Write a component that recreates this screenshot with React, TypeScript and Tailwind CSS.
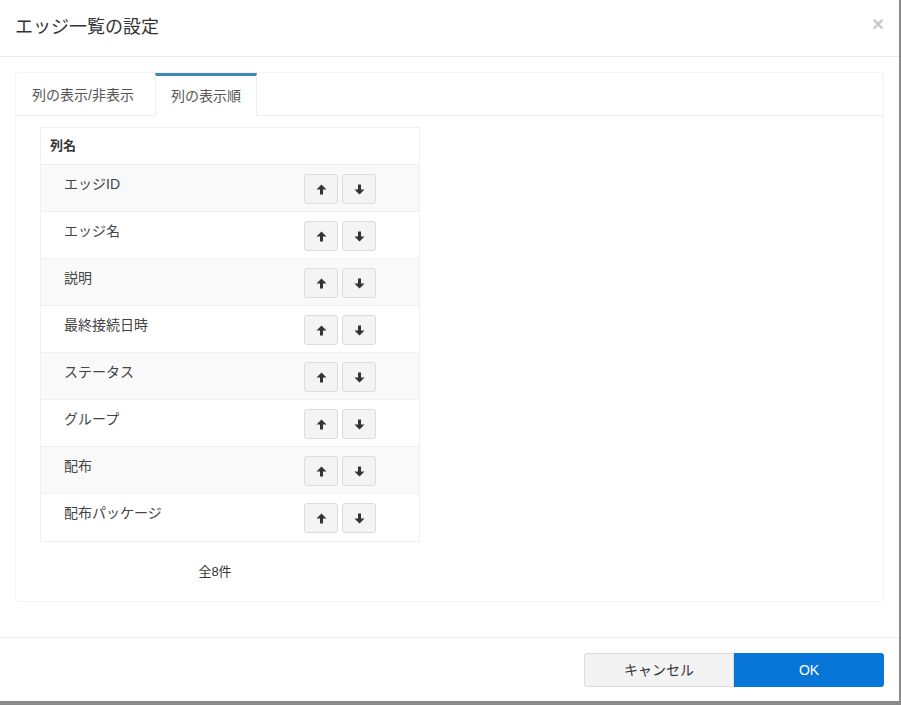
const columns = [
  'エッジID',
  'エッジ名',
  '説明',
  '最終接続日時',
  'ステータス',
  'グループ',
  '配布',
  '配布パッケージ',
];

const font = "font-['Liberation_Sans','Noto_Sans_CJK_JP',sans-serif]";

function Arrow({ down }: { down?: boolean }) {
  return (
    <svg
      width="11"
      height="11"
      viewBox="0 0 11 11"
      className={down ? 'rotate-180' : ''}
      fill="currentColor"
    >
      <path d="M5.5 0.5 L10.5 5.5 L7 5.5 L7 10.5 L4 10.5 L4 5.5 L0.5 5.5 Z" />
    </svg>
  );
}

function MoveButton({ down }: { down?: boolean }) {
  return (
    <button className="flex h-[30px] w-[34px] items-center justify-center rounded-[3px] border border-[#dcdcdc] bg-[#f4f4f4] text-[#333]">
      <Arrow down={down} />
    </button>
  );
}

export default function App() {
  return (
    <div className={`h-[705px] w-[901px] bg-[#8a8a8a] ${font}`}>
      <div className="flex h-[701px] w-[899px] flex-col bg-white text-[#333]">
        {/* header */}
        <div className="flex h-[57px] items-center justify-between border-b border-[#ececec] pl-[15px] pr-[15px]">
          <h1 className="pb-[1px] text-[18px] font-normal text-[#333]">
            エッジ一覧の設定
          </h1>
          <span className="pb-[8px] text-[20px] font-bold leading-none text-[#c8c8c8]">
            ×
          </span>
        </div>

        {/* body */}
        <div className="px-[15px] pt-[15px]">
          <div className="rounded-[3px] border border-[#f3f3f3]">
            <div className="flex h-[43px] border-b border-[#eeeeee]">
              <div className="flex w-[139px] items-center pl-[16px] pt-[2px] text-[14px] text-[#555]">
                列の表示/非表示
              </div>
              <div className="-mb-px flex w-[102px] items-center justify-center border-x border-t-[3px] border-x-[#eeeeee] border-t-[#3a8bb6] bg-white text-[14px] text-[#555]">
                列の表示順
              </div>
            </div>

            <div className="px-[24px] pt-[11px]">
              <div className="w-[380px] border border-[#f0f0f0]">
                <div className="flex h-[37px] items-center border-b border-[#eeeeee] px-[9px] text-[13px] font-bold text-[#333]">
                  列名
                </div>
                {columns.map((name, i) => (
                  <div
                    key={name}
                    className={`flex h-[47px] justify-between border-b border-[#f0f0f0] pl-[23px] pr-[43px] last:border-b-0 ${
                      i % 2 === 0 ? 'bg-[#f9f9f9]' : 'bg-white'
                    }`}
                  >
                    <span className="pt-[9px] text-[14px] text-[#444]">{name}</span>
                    <div className="flex gap-[4px] pt-[9px]">
                      <MoveButton />
                      <MoveButton down />
                    </div>
                  </div>
                ))}
              </div>
              <div className="flex w-[350px] justify-center pb-[19px] pt-[20px] text-[13px] text-[#333]">
                全8件
              </div>
            </div>
          </div>
        </div>

        {/* footer */}
        <div className="mt-auto flex h-[64px] items-start justify-end border-t border-[#eeeeee] px-[15px] pt-[15px]">
          <button className="h-[34px] w-[150px] rounded-l-[3px] border border-[#dadada] bg-[#f3f3f3] text-[14px] text-[#333]">
            キャンセル
          </button>
          <button className="h-[34px] w-[150px] rounded-r-[3px] bg-[#0875d8] text-[14px] text-white">
            OK
          </button>
        </div>
      </div>
    </div>
  );
}
